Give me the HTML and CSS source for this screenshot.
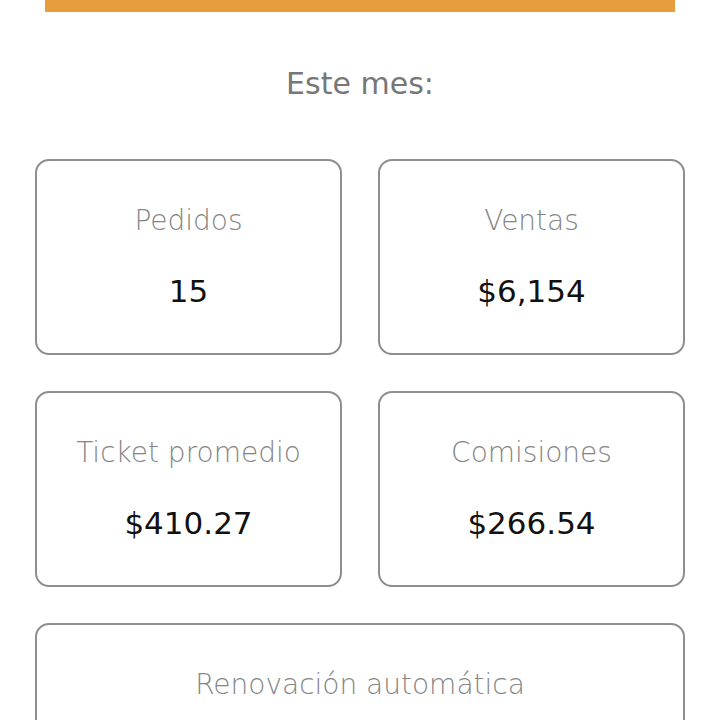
FILE: index.html
```html
<!DOCTYPE html>
<html lang="es">
<head>
  <meta charset="UTF-8">
  <title>Resumen</title>
  <link rel="stylesheet" href="styles.css">
</head>
<body>

<div class="page">
  <div class="top-bar"></div>
  <h2 class="period">Este mes:</h2>

  <div class="stats">
    <div class="card">
      <p class="card-label">Pedidos</p>
      <p class="card-value">15</p>
    </div>
    <div class="card">
      <p class="card-label">Ventas</p>
      <p class="card-value">$6,154</p>
    </div>
    <div class="card">
      <p class="card-label">Ticket promedio</p>
      <p class="card-value">$410.27</p>
    </div>
    <div class="card">
      <p class="card-label">Comisiones</p>
      <p class="card-value">$266.54</p>
    </div>
    <div class="card wide">
      <p class="card-label">Renovación automática</p>
    </div>
  </div>
</div>

</body>
</html>
```

FILE: styles.css
```css
* { box-sizing: border-box; }
body { margin:0; background:#fff; font-family:"DejaVu Sans", sans-serif; }
.page { padding:0 35px; }
.top-bar { height:12px; margin:0 10px; background:#e89d3c; }
.period { margin:0; padding:54px 0 0; height:147px; text-align:center; font-size:30px; font-weight:normal; color:#777; }
.stats { display:grid; grid-template-columns:1fr 1fr; gap:36px; }
.card { height:196px; padding-top:44px; display:flex; flex-direction:column; align-items:center; gap:36px; border:2px solid #8e8e8e; border-radius:14px; }
.card.wide { grid-column:1 / 3; }
.card-label { margin:0; font-size:28px; font-weight:300; line-height:32px; color:#858585; }
.card-value { margin:0; font-size:31px; line-height:36px; color:#111; }
```
